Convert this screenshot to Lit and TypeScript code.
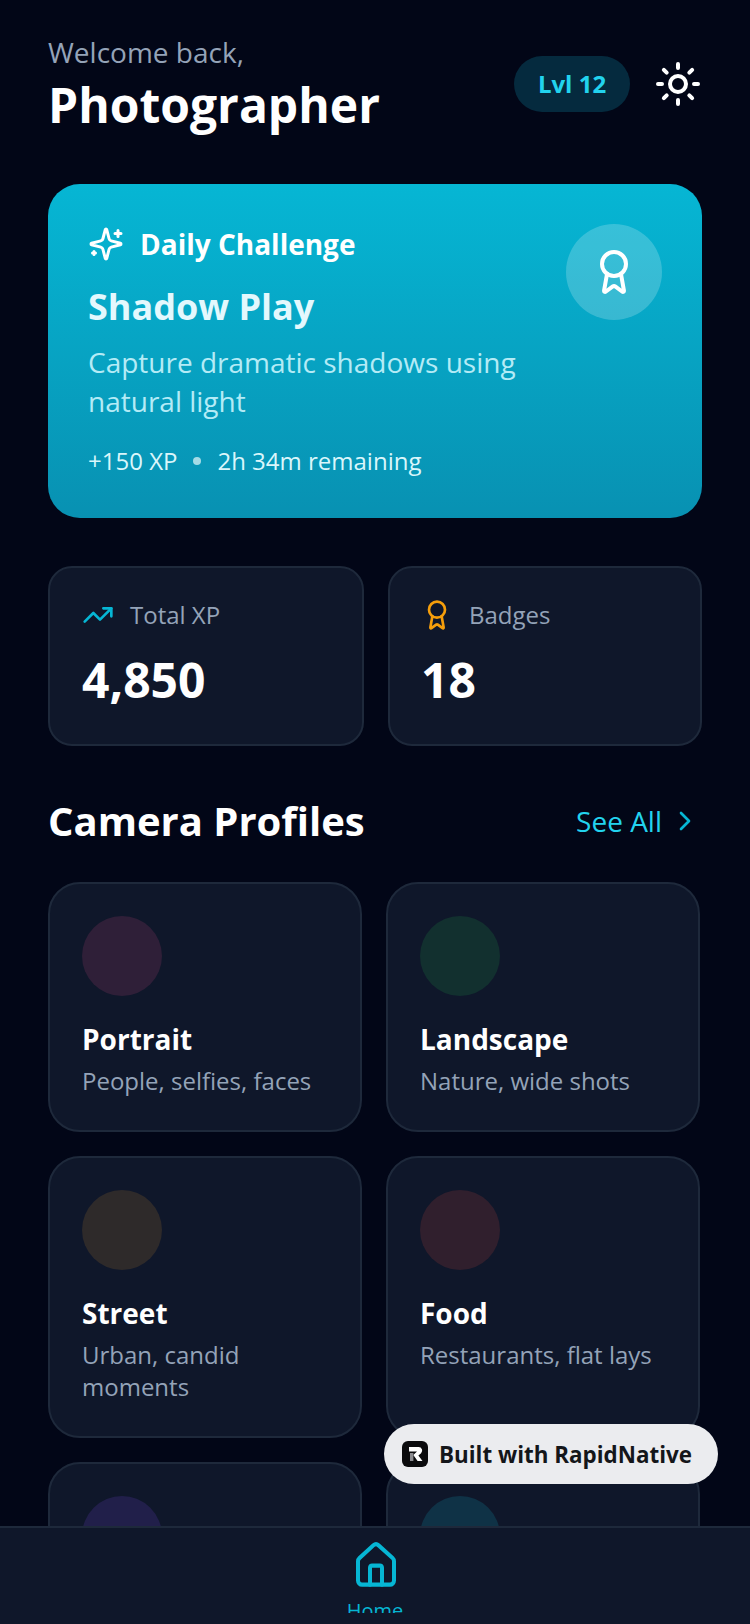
import { LitElement, css, html, svg } from "lit";
import { customElement } from "lit/decorators.js";

const award = svg`<path d="m15.477 12.89 1.515 8.526a.5.5 0 0 1-.81.47l-3.58-2.687a1 1 0 0 0-1.197 0l-3.586 2.686a.5.5 0 0 1-.81-.469l1.514-8.526"/><circle cx="12" cy="8" r="6"/>`;

const profiles = [
  { name: "Portrait", desc: "People, selfies, faces", tint: "#2f1f38" },
  { name: "Landscape", desc: "Nature, wide shots", tint: "#12302f" },
  { name: "Street", desc: "Urban, candid moments", tint: "#2e2a2a" },
  { name: "Food", desc: "Restaurants, flat lays", tint: "#301f2d" },
  // bottom row sits behind the tab bar, only the circles show
  { name: "", desc: "", tint: "#211f4a" },
  { name: "", desc: "", tint: "#0f3246" },
];

@customElement("app-root")
export class AppRoot extends LitElement {
  static styles = css`
    :host {
      display: block;
      font-family: "Open Sans", sans-serif;
      color: #fff;
    }

    .page {
      position: relative;
      height: 1624px;
      background: #020617;
      display: flex;
      flex-direction: column;
      overflow: hidden;
    }

    .scroll {
      flex: 1;
      min-height: 0;
      overflow: hidden;
      padding: 31px 48px 0;
    }

    svg {
      display: block;
      fill: none;
      stroke: currentColor;
      stroke-width: 2;
      stroke-linecap: round;
      stroke-linejoin: round;
      flex: none;
    }

    .header {
      display: flex;
      justify-content: space-between;
      align-items: center;
      height: 105px;
    }

    .welcome {
      font-size: 28px;
      line-height: 40px;
      color: #94a3b8;
    }

    .name {
      font-size: 48px;
      line-height: 60px;
      font-weight: 700;
      margin-top: 3px;
    }

    .header-right {
      display: flex;
      align-items: center;
      gap: 24px;
    }

    .level {
      width: 116px;
      height: 56px;
      border-radius: 28px;
      background: #052a3e;
      color: #22d3ee;
      font-size: 24px;
      font-weight: 700;
      display: flex;
      align-items: center;
      justify-content: center;
    }

    .sun {
      width: 48px;
      height: 48px;
      color: #fff;
    }

    .hero {
      margin-top: 48px;
      height: 334px;
      box-sizing: border-box;
      border-radius: 32px;
      padding: 42px 40px 0;
      background: linear-gradient(180deg, #06b6d4, #0891b2);
      position: relative;
    }

    .hero-label {
      display: flex;
      align-items: center;
      gap: 16px;
      font-size: 28px;
      line-height: 36px;
      font-weight: 700;
    }

    .hero-label svg {
      width: 36px;
      height: 36px;
    }

    .hero-title {
      font-size: 36px;
      line-height: 48px;
      font-weight: 700;
      color: #e3f8fd;
      margin-top: 21px;
    }

    .hero-desc {
      font-size: 28px;
      line-height: 39px;
      color: #b4ebf6;
      margin-top: 12px;
      width: 470px;
    }

    .hero-meta {
      display: flex;
      align-items: center;
      font-size: 24px;
      line-height: 32px;
      color: #daf6fb;
      margin-top: 24px;
    }

    .dot {
      width: 8px;
      height: 8px;
      border-radius: 50%;
      background: #a5dbe6;
      margin: 0 16px;
    }

    .medal {
      position: absolute;
      top: 40px;
      right: 40px;
      width: 96px;
      height: 96px;
      border-radius: 50%;
      background: rgba(255, 255, 255, 0.2);
      display: flex;
      align-items: center;
      justify-content: center;
    }

    .medal svg {
      width: 48px;
      height: 48px;
    }

    .stats {
      display: grid;
      grid-template-columns: 316px 314px;
      gap: 24px;
      margin-top: 48px;
    }

    .stat {
      height: 180px;
      box-sizing: border-box;
      border-radius: 24px;
      border: 2px solid #1e293b;
      background: #0f172a;
      padding: 31px 32px;
    }

    .stat + .stat {
      padding-left: 31px;
    }

    .stat-label {
      display: flex;
      align-items: center;
      gap: 16px;
      font-size: 24px;
      line-height: 32px;
      color: #94a3b8;
    }

    .stat-label svg {
      width: 32px;
      height: 32px;
    }

    .stat-value {
      font-size: 48px;
      line-height: 60px;
      font-weight: 700;
      margin-top: 19px;
    }

    .section {
      display: flex;
      justify-content: space-between;
      align-items: center;
      margin-top: 47px;
      height: 56px;
    }

    .section h2 {
      margin: 0;
      font-size: 40px;
      line-height: 56px;
      font-weight: 700;
    }

    .see-all {
      display: flex;
      align-items: center;
      gap: 7px;
      margin-right: 1px;
      font-size: 28px;
      color: #22d3ee;
    }

    .see-all svg {
      width: 32px;
      height: 32px;
      color: #06b6d4;
    }

    .grid {
      display: grid;
      grid-template-columns: 314px 314px;
      gap: 24px;
      margin-top: 33px;
      align-items: stretch;
    }

    .profile {
      box-sizing: border-box;
      border-radius: 32px;
      border: 2px solid #1e293b;
      background: #0f172a;
      padding: 32px 32px 33px;
    }

    .circle {
      width: 80px;
      height: 80px;
      border-radius: 50%;
    }

    .profile h3 {
      margin: 23px 0 0;
      font-size: 28px;
      line-height: 40px;
      font-weight: 700;
    }

    .profile p {
      margin: 6px 0 0;
      font-size: 24px;
      line-height: 32px;
      color: #94a3b8;
    }

    .tabbar {
      flex: none;
      height: 98px;
      box-sizing: border-box;
      border-top: 2px solid #1e293b;
      background: #0f172a;
      display: flex;
      flex-direction: column;
      align-items: center;
      padding-top: 12px;
      overflow: hidden;
      color: #06b6d4;
    }

    .tabbar svg {
      width: 48px;
      height: 51px;
      margin-left: 2px;
    }

    .tabbar span {
      display: block;
      height: 16px;
      overflow: hidden;
      font-size: 20px;
      line-height: 28px;
      margin-top: 6px;
    }

    .built {
      position: absolute;
      left: 384px;
      top: 1424px;
      width: 334px;
      height: 60px;
      box-sizing: border-box;
      border-radius: 30px;
      background: #ebecef;
      display: flex;
      align-items: center;
      gap: 11px;
      padding-left: 18px;
      color: #14161a;
      font-size: 22.4px;
      font-weight: 700;
      white-space: nowrap;
    }

    .logo {
      width: 26px;
      height: 26px;
      border-radius: 6px;
      background: #0b0b0d;
      stroke: none;
    }

    .logo path {
      stroke: none;
      fill: #fff;
    }

    .logo .stem {
      fill: #8b8b8f;
    }
  `;

  render() {
    return html`
      <div class="page">
        <div class="scroll">
          <div class="header">
            <div>
              <div class="welcome">Welcome back,</div>
              <div class="name">Photographer</div>
            </div>
            <div class="header-right">
              <div class="level">Lvl 12</div>
              <svg class="sun" viewBox="0 0 24 24">
                <circle cx="12" cy="12" r="4" />
                <path
                  d="M12 2v2M12 20v2M4.93 4.93l1.41 1.41M17.66 17.66l1.41 1.41M2 12h2M20 12h2M6.34 17.66l-1.41 1.41M19.07 4.93l-1.41 1.41"
                />
              </svg>
            </div>
          </div>

          <div class="hero">
            <div class="hero-label">
              <svg viewBox="0 0 24 24">
                <path
                  d="M9.937 15.5A2 2 0 0 0 8.5 14.063l-6.135-1.582a.5.5 0 0 1 0-.962L8.5 9.936A2 2 0 0 0 9.937 8.5l1.582-6.135a.5.5 0 0 1 .963 0L14.063 8.5A2 2 0 0 0 15.5 9.937l6.135 1.581a.5.5 0 0 1 0 .964L15.5 14.063a2 2 0 0 0-1.437 1.437l-1.582 6.135a.5.5 0 0 1-.963 0z"
                />
                <path d="M20 3v4M22 5h-4M4 17v2M5 18H3" />
              </svg>
              Daily Challenge
            </div>
            <div class="hero-title">Shadow Play</div>
            <div class="hero-desc">
              Capture dramatic shadows using natural light
            </div>
            <div class="hero-meta">
              +150 XP<span class="dot"></span>2h 34m remaining
            </div>
            <div class="medal"><svg viewBox="0 0 24 24">${award}</svg></div>
          </div>

          <div class="stats">
            <div class="stat">
              <div class="stat-label">
                <svg viewBox="0 0 24 24" style="color:#06b6d4">
                  <path d="M16 7h6v6" />
                  <path d="m22 7-8.5 8.5-5-5L2 17" />
                </svg>
                Total XP
              </div>
              <div class="stat-value">4,850</div>
            </div>
            <div class="stat">
              <div class="stat-label">
                <svg viewBox="0 0 24 24" style="color:#f59e0b">${award}</svg>
                Badges
              </div>
              <div class="stat-value">18</div>
            </div>
          </div>

          <div class="section">
            <h2>Camera Profiles</h2>
            <div class="see-all">
              See All
              <svg viewBox="0 0 24 24"><path d="m9 18 6-6-6-6" /></svg>
            </div>
          </div>

          <div class="grid">
            ${profiles.map(
              (p) => html`
                <div class="profile">
                  <div class="circle" style="background:${p.tint}"></div>
                  ${p.name ? html`<h3>${p.name}</h3><p>${p.desc}</p>` : ""}
                </div>
              `,
            )}
          </div>
        </div>

        <div class="tabbar">
          <svg viewBox="0 0 24 24" preserveAspectRatio="none">
            <path d="M15 21v-8a1 1 0 0 0-1-1h-4a1 1 0 0 0-1 1v8" />
            <path
              d="M3 10a2 2 0 0 1 .709-1.528l7-5.999a2 2 0 0 1 2.582 0l7 5.999A2 2 0 0 1 21 10v9a2 2 0 0 1-2 2H5a2 2 0 0 1-2-2z"
            />
          </svg>
          <span>Home</span>
        </div>

        <div class="built">
          <svg class="logo" viewBox="0 0 26 26">
            <path d="M7 6h9.5a3.6 3.6 0 0 1 2.6 6.2L16.4 14.6 20.5 20h-4.9l-4.3-6 3.7-3.6H7z" />
            <path class="stem" d="M8 12h3.4v8H8z" />
          </svg>
          Built with RapidNative
        </div>
      </div>
    `;
  }
}
